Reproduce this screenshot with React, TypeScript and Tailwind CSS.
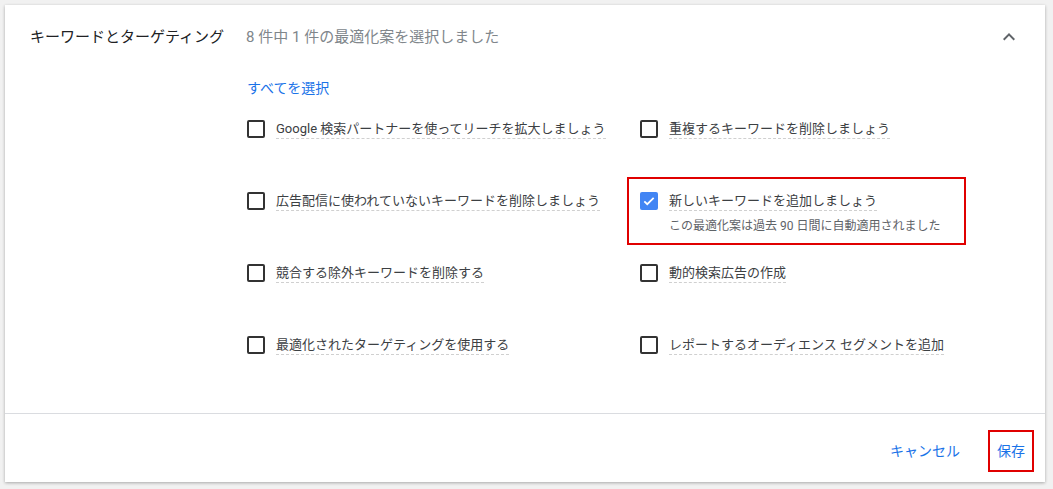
import { useState } from "react";

type Item = { id: string; label: string; note?: string; highlight?: boolean };

const items: Item[] = [
  { id: "partners", label: "Google 検索パートナーを使ってリーチを拡大しましょう" },
  { id: "dupes", label: "重複するキーワードを削除しましょう" },
  { id: "unused", label: "広告配信に使われていないキーワードを削除しましょう" },
  {
    id: "newkw",
    label: "新しいキーワードを追加しましょう",
    note: "この最適化案は過去 90 日間に自動適用されました",
    highlight: true,
  },
  { id: "negatives", label: "競合する除外キーワードを削除する" },
  { id: "dsa", label: "動的検索広告の作成" },
  { id: "optimized", label: "最適化されたターゲティングを使用する" },
  { id: "audience", label: "レポートするオーディエンス セグメントを追加" },
];

function Checkbox(props: { checked: boolean; onChange: () => void }) {
  if (props.checked) {
    return (
      <button
        onClick={props.onChange}
        className="w-[18px] h-[18px] rounded-[2px] bg-[#4285f4] flex items-center justify-center shrink-0"
      >
        <svg width="14" height="14" viewBox="0 0 24 24">
          <path d="M4 12.5l5 5L20 6.5" fill="none" stroke="white" strokeWidth="3" />
        </svg>
      </button>
    );
  }
  return (
    <button
      onClick={props.onChange}
      className="w-[18px] h-[18px] rounded-[2px] border-2 border-[#333] bg-white shrink-0"
    />
  );
}

function Option(props: { item: Item; checked: boolean; onToggle: () => void }) {
  const { item } = props;
  return (
    <div className="relative flex items-start gap-[11px]">
      {item.highlight && (
        <div className="absolute left-[-13px] top-[-14px] w-[339px] h-[68px] border-2 border-[#e00000] pointer-events-none" />
      )}
      <div className="h-5 flex items-center">
        <Checkbox checked={props.checked} onChange={props.onToggle} />
      </div>
      <div className="flex flex-col items-start">
        <span className="text-[13px] leading-[18px] pt-[1px] text-[#3c4043] border-b border-dashed border-[#d0d0d0]">
          {item.label}
        </span>
        {item.note && (
          <span className="text-[12px] leading-[18px] mt-[6px] text-[#5f6368]">{item.note}</span>
        )}
      </div>
    </div>
  );
}

const App = () => {
  const [checked, setChecked] = useState<Record<string, boolean>>({ newkw: true });
  const count = Object.values(checked).filter(Boolean).length;

  return (
    <div
      className="min-h-screen bg-[#f1f1f1] pt-[5px] pl-[5px]"
      style={{ fontFamily: '"Roboto","Noto Sans CJK JP",sans-serif' }}
    >
      <div className="w-[1040px] h-[477px] bg-white shadow-[0_1px_3px_rgba(0,0,0,0.3)] flex flex-col">
        {/* Header */}
        <div className="h-16 flex items-center pl-[25px] pr-6">
          <span className="text-[15px] text-[#202124]">キーワードとターゲティング</span>
          <span className="text-[15px] text-[#80868b] ml-[22px]">
            {items.length} 件中 {count} 件の最適化案を選択しました
          </span>
          <svg className="ml-auto" width="24" height="24" viewBox="0 0 24 24">
            <path d="M7.41 15.41L12 10.83l4.59 4.58L18 14l-6-6-6 6z" fill="#5f6368" />
          </svg>
        </div>

        {/* Options */}
        <div className="pl-[242px] pt-[9px] flex-1">
          <button
            className="block text-[14px] leading-5 text-[#1a73e8]"
            onClick={() => setChecked(Object.fromEntries(items.map((i) => [i.id, true])))}
          >
            すべてを選択
          </button>
          <div className="grid grid-cols-[393px_1fr] auto-rows-[72px] mt-[21px]">
            {items.map((item) => (
              <Option
                key={item.id}
                item={item}
                checked={!!checked[item.id]}
                onToggle={() => setChecked({ ...checked, [item.id]: !checked[item.id] })}
              />
            ))}
          </div>
        </div>

        {/* Footer */}
        <div className="border-t border-[#dadce0] h-[69px] flex items-center justify-end pr-[11px] pt-[6px]">
          <button className="block text-[14px] leading-5 text-[#1a73e8] mr-[28px]">キャンセル</button>
          <div className="border-2 border-[#e00000] px-[7px] py-[9px] flex">
            <button className="block text-[14px] leading-5 text-[#1a73e8]">保存</button>
          </div>
        </div>
      </div>
    </div>
  );
};

export default App;
